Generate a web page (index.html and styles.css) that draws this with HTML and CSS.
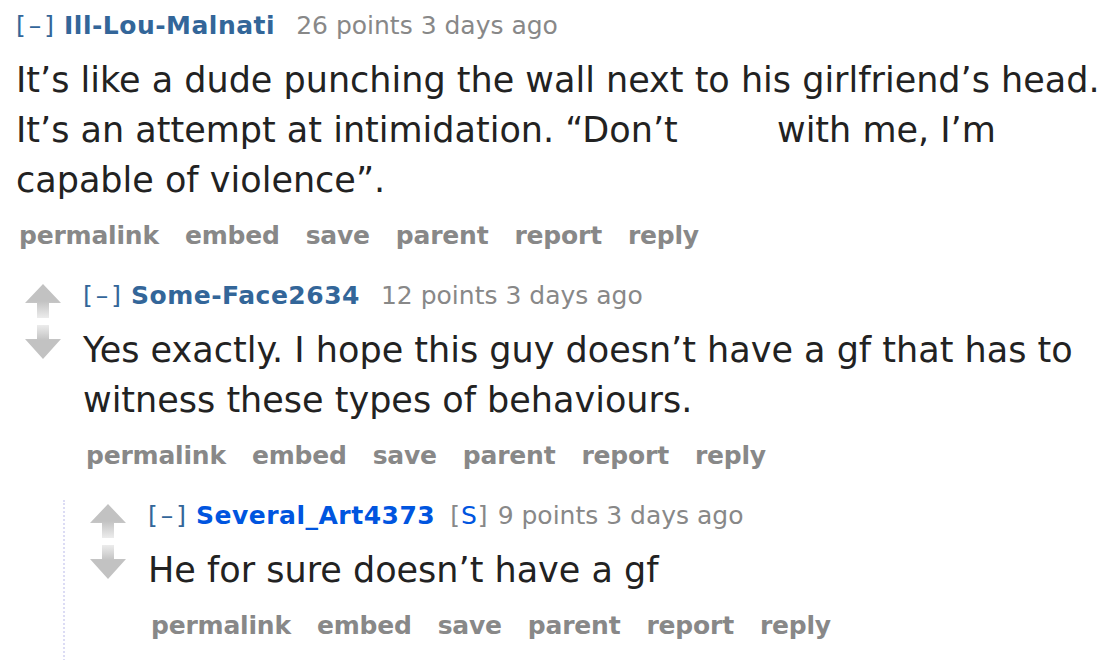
FILE: index.html
```html
<!DOCTYPE html>
<html lang="en">
<head>
<meta charset="utf-8">
<title>Comments</title>
<link rel="stylesheet" href="styles.css">
</head>
<body>
<div class="thread">
  <div class="comment root">
    <div class="entry">
      <p class="tagline"><a class="expand">[–]</a><a class="author">Ill-Lou-Malnati</a><span class="score">26 points</span> <time>3 days ago</time></p>
      <div class="md">It’s like a dude punching the wall next to his girlfriend’s head. It’s an attempt at intimidation. “Don’t <span class="redacted"></span> with me, I’m capable of violence”.</div>
      <ul class="buttons">
        <li>permalink</li><li>embed</li><li>save</li><li>parent</li><li>report</li><li>reply</li>
      </ul>
    </div>
    <div class="child first">
      <div class="comment">
        <div class="row">
          <div class="midcol">
            <svg class="arrow" viewBox="0 0 36 34" width="36" height="34"><defs><linearGradient id="gu" x1="0" y1="0" x2="0" y2="1"><stop offset="0.5" stop-color="#c2c2c2"/><stop offset="1" stop-color="#ececec"/></linearGradient></defs><path d="M18 0 L36 19 L24 19 L24 34 L12 34 L12 19 L0 19 Z" fill="url(#gu)"/></svg>
            <svg class="arrow" viewBox="0 0 36 34" width="36" height="34"><defs><linearGradient id="gd" x1="0" y1="0" x2="0" y2="1"><stop offset="0" stop-color="#ececec"/><stop offset="0.45" stop-color="#c2c2c2"/></linearGradient></defs><path d="M12 0 L24 0 L24 14 L36 14 L18 34 L0 14 L12 14 Z" fill="url(#gd)"/></svg>
          </div>
          <div class="entry">
            <p class="tagline"><a class="expand">[–]</a><a class="author">Some-Face2634</a><span class="score">12 points</span> <time>3 days ago</time></p>
            <div class="md">Yes exactly. I hope this guy doesn’t have a gf that has to witness these types of behaviours.</div>
            <ul class="buttons">
              <li>permalink</li><li>embed</li><li>save</li><li>parent</li><li>report</li><li>reply</li>
            </ul>
          </div>
        </div>
        <div class="child nested">
          <div class="comment">
            <div class="row">
              <div class="midcol">
                <svg class="arrow" viewBox="0 0 36 34" width="36" height="34"><path d="M18 0 L36 19 L24 19 L24 34 L12 34 L12 19 L0 19 Z" fill="url(#gu)"/></svg>
                <svg class="arrow" viewBox="0 0 36 34" width="36" height="34"><path d="M12 0 L24 0 L24 14 L36 14 L18 34 L0 14 L12 14 Z" fill="url(#gd)"/></svg>
              </div>
              <div class="entry">
                <p class="tagline"><a class="expand">[–]</a><a class="author submitter">Several_Art4373</a><span class="flair">[<span class="s">S</span>]</span><span class="score">9 points</span> <time>3 days ago</time></p>
                <div class="md">He for sure doesn’t have a gf</div>
                <ul class="buttons">
                  <li>permalink</li><li>embed</li><li>save</li><li>parent</li><li>report</li><li>reply</li>
                </ul>
              </div>
            </div>
          </div>
        </div>
      </div>
    </div>
  </div>
</div>
</body>
</html>
```
FILE: styles.css
```css
html, body {
  margin: 0;
  padding: 0;
  background: #ffffff;
}
body {
  font-family: "DejaVu Sans", Verdana, sans-serif;
  color: #222222;
  overflow: hidden;
}
.thread {
  padding: 11px 0 0 16px;
}
.entry {
  min-width: 0;
  flex: 1;
}
.tagline {
  margin: 0;
  font-size: 25px;
  line-height: 30px;
  color: #888888;
  white-space: nowrap;
}
.expand {
  display: inline-block;
  color: #336699;
  margin-right: 7px;
  letter-spacing: 3px;
}
.author {
  color: #336699;
  font-weight: bold;
  letter-spacing: 0.5px;
  margin-right: 21px;
}
.author.submitter {
  color: #0055df;
  margin-right: 15px;
}
.flair {
  color: #888888;
  letter-spacing: 1px;
  margin-right: 9px;
}
.flair .s {
  color: #0055df;
}
.md {
  margin-top: 14px;
  margin-right: 8px;
  font-size: 35px;
  line-height: 50px;
  color: #222222;
}
.redacted {
  display: inline-block;
  width: 77px;
  height: 1px;
}
.buttons {
  list-style: none;
  margin: 16px 0 0 3px;
  padding: 0;
  display: flex;
  gap: 26px;
  font-size: 25px;
  line-height: 30px;
  font-weight: bold;
  letter-spacing: -0.2px;
  color: #888888;
}
.child.first {
  margin: 30px 0 0 9px;
}
.row {
  display: flex;
  gap: 22px;
}
.midcol {
  width: 36px;
  flex: none;
  padding-top: 3px;
  display: flex;
  flex-direction: column;
  gap: 7px;
}
.arrow {
  display: block;
}
.child.nested {
  margin: 29px 0 0 38px;
  padding: 1px 0 40px 25px;
  border-left: 2px dotted #dcdcf4;
}
```
